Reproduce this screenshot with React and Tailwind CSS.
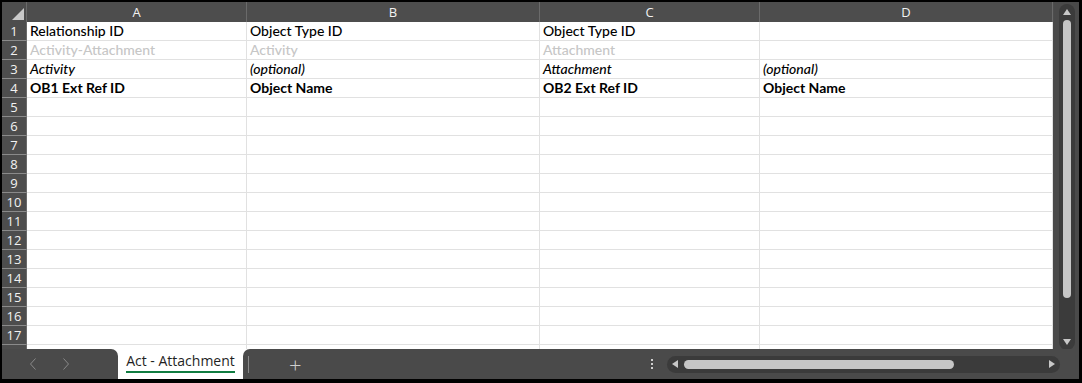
import React from 'react';

const cols = [
    { key: 'A', w: 'w-[220px]' },
    { key: 'B', w: 'w-[293px]' },
    { key: 'C', w: 'w-[220px]' },
    { key: 'D', w: 'w-[293px]' },
];

const data = [
    { cells: ['Relationship ID', 'Object Type ID', 'Object Type ID', ''], style: 'font-medium text-black' },
    { cells: ['Activity-Attachment', 'Activity', 'Attachment', ''], style: 'font-medium text-[#c6c6c6]' },
    { cells: ['Activity', '(optional)', 'Attachment', '(optional)'], style: 'italic font-medium text-black' },
    { cells: ['OB1 Ext Ref ID', 'Object Name', 'OB2 Ext Ref ID', 'Object Name'], style: 'font-bold text-black' },
];

const rowNums = Array.from({ length: 18 }, (_, i) => i + 1);

function Triangle({ dir, className }) {
    const pts = {
        up: '0,6 4,0 8,6',
        down: '0,0 8,0 4,6',
        left: '6,0 6,8 0,4',
        right: '0,0 0,8 6,4',
    }[dir];
    const vb = dir === 'up' || dir === 'down' ? '0 0 8 6' : '0 0 6 8';
    return (
        <svg viewBox={vb} className={className}>
            <polygon points={pts} fill="#c8c8c8" />
        </svg>
    );
}

function Chevron({ dir }) {
    return (
        <svg viewBox="0 0 6 12" className="w-[6px] h-[12px]">
            <polyline
                points={dir === 'left' ? '5.5,0.5 0.5,6 5.5,11.5' : '0.5,0.5 5.5,6 0.5,11.5'}
                fill="none"
                stroke="#8a8a8a"
                strokeWidth="1"
            />
        </svg>
    );
}

export default function App() {
    return (
        <div className="w-[1082px] h-[383px] bg-black pt-[2px] pl-[2px] pr-[3px] pb-[4px]">
            <div className="w-full h-full bg-[#4a4a4a] flex flex-col overflow-hidden">

                {/* Grid + vertical scrollbar */}
                <div className="flex h-[347px] overflow-hidden">
                    <div className="w-[1052px] h-full overflow-hidden flex flex-col">
                        {/* Column headers */}
                        <div className="flex h-[20px] shrink-0 bg-[#4d4d4d] text-[#f2f2f2] font-['Open_Sans',sans-serif] text-[13px]">
                            <div className="w-[25px] h-full border-r border-[#6a6a6a] relative">
                                <svg viewBox="0 0 12 12" className="absolute right-[2px] bottom-[2px] w-[12px] h-[12px]">
                                    <polygon points="12,0 12,12 0,12" fill="#c9c9c9" />
                                </svg>
                            </div>
                            {cols.map((c) => (
                                <div key={c.key} className={`${c.w} shrink-0 h-full border-r border-[#6a6a6a] flex items-center justify-center leading-none`}>
                                    {c.key}
                                </div>
                            ))}
                        </div>

                        {/* Rows */}
                        {rowNums.map((n) => {
                            const row = data[n - 1];
                            return (
                                <div key={n} className="flex h-[19px] shrink-0">
                                    <div className="w-[25px] h-full bg-[#4d4d4d] border-b border-[#8a8a8a] border-r border-r-[#6a6a6a] text-[#f2f2f2] font-['Open_Sans',sans-serif] text-[13px] flex items-center justify-center leading-none">
                                        {n < 18 ? n : ''}
                                    </div>
                                    {cols.map((c, i) => (
                                        <div
                                            key={c.key}
                                            className={`${c.w} shrink-0 h-full bg-white border-b border-r border-[#e1e1e1] pl-[3px] flex items-center whitespace-nowrap overflow-hidden font-['Lato',sans-serif] text-[14px] leading-none ${row ? row.style : ''}`}
                                        >
                                            {row ? row.cells[i] : ''}
                                        </div>
                                    ))}
                                </div>
                            );
                        })}
                    </div>

                    {/* Vertical scrollbar */}
                    <div className="flex-1 flex justify-center pt-[2px]">
                        <div className="w-[16px] h-[346px] rounded-full bg-[#3b3b3b] flex flex-col items-center pt-[5px] pb-[5px]">
                            <Triangle dir="up" className="w-[8px] h-[6px]" />
                            <div className="w-[8px] h-[278px] mt-[5px] rounded-full bg-[#c6c6c6]" />
                            <div className="flex-1" />
                            <Triangle dir="down" className="w-[8px] h-[6px]" />
                        </div>
                    </div>
                </div>

                {/* Sheet tab bar */}
                <div className="flex h-[30px] shrink-0">
                    <div className="w-[25px] bg-[#4a4a4a]" />
                    <div className="flex flex-1 bg-white">
                        <div className="w-[91px] bg-[#4a4a4a] rounded-tr-[7px] flex items-center">
                            <div className="ml-[3px]"><Chevron dir="left" /></div>
                            <div className="ml-[27px]"><Chevron dir="right" /></div>
                        </div>
                        <div className="w-[125px] h-[27px] bg-white rounded-b-[6px] flex flex-col items-center justify-center pt-[2px]">
                            <span className="font-['Open_Sans',sans-serif] font-medium text-[14px] text-[#1f1f1f] leading-none">Act - Attachment</span>
                            <div className="w-[109px] h-[2px] bg-[#107c41] mt-[3px]" />
                        </div>
                        <div className="flex-1 bg-[#4a4a4a] rounded-tl-[7px] flex items-center">
                            <div className="w-px h-[17px] bg-[#8a8a8a] ml-[5px]" />
                            <span className="ml-[40px] text-[22px] font-['Open_Sans',sans-serif] text-[#cfcfcf] font-light leading-none">+</span>
                            <div className="ml-[349px] flex flex-col gap-[2px]">
                                <div className="w-[2px] h-[2px] bg-[#d0d0d0]" />
                                <div className="w-[2px] h-[2px] bg-[#d0d0d0]" />
                                <div className="w-[2px] h-[2px] bg-[#d0d0d0]" />
                            </div>
                            <div className="ml-[14px] w-[393px] h-[17px] rounded-full bg-[#3b3b3b] flex items-center px-[5px]">
                                <Triangle dir="left" className="w-[6px] h-[8px]" />
                                <div className="ml-[6px] w-[270px] h-[9px] rounded-full bg-[#c6c6c6]" />
                                <div className="flex-1" />
                                <Triangle dir="right" className="w-[6px] h-[8px]" />
                            </div>
                        </div>
                    </div>
                </div>
            </div>
        </div>
    );
}
